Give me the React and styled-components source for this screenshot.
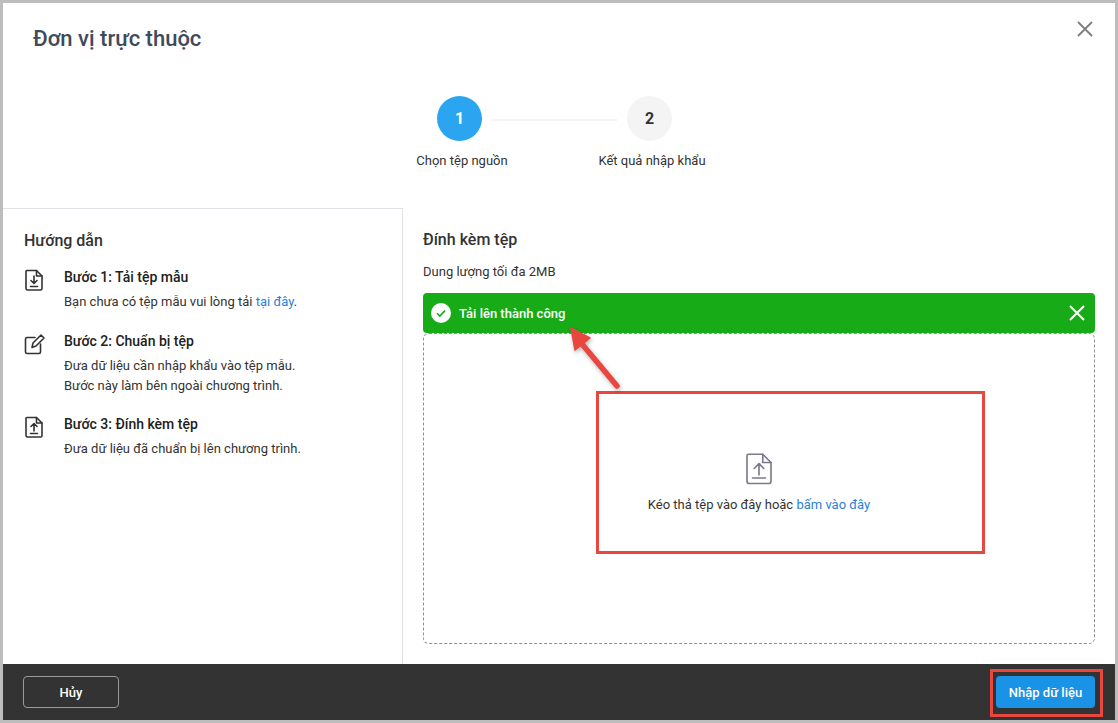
import React from "react"
import styled, { createGlobalStyle } from "styled-components"

const GlobalStyle = createGlobalStyle`
  html, body {
    margin: 0;
    padding: 0;
    background: #fff;
  }
  body {
    font-family: Roboto, "Liberation Sans", sans-serif;
    color: #212121;
  }
  * {
    box-sizing: border-box;
  }
`

const Frame = styled.div`
  position: relative;
  width: 1118px;
  height: 723px;
  border: 3px solid #bdbdbd;
  display: flex;
  flex-direction: column;
  background: #fff;
  overflow: hidden;
`

const Header = styled.div`
  height: 70px;
  padding: 21px 21px 0 30px;
  display: flex;
  justify-content: space-between;
  align-items: flex-start;
`

const Title = styled.h1`
  margin: 0;
  font-size: 22px;
  line-height: 30px;
  font-weight: 500;
  color: #3f4a5a;
`

const CloseButton = styled.div`
  margin-top: -4px;
  color: #7d7d7d;
  line-height: 0;
`

const Stepper = styled.div`
  height: 135px;
  padding: 23px 9px 0 0;
  display: flex;
  justify-content: center;
`

const Step = styled.div`
  width: 190px;
  display: flex;
  flex-direction: column;
  align-items: center;
  position: relative;
`

const StepCircle = styled.div`
  width: 45px;
  height: 45px;
  border-radius: 50%;
  display: flex;
  align-items: center;
  justify-content: center;
  font-size: 16px;
  font-weight: 700;
  background: ${props => (props.$active ? "#2ca5f0" : "#f4f4f4")};
  color: ${props => (props.$active ? "#fff" : "#333")};
`

const StepLine = styled.div`
  position: absolute;
  top: 23px;
  left: 127px;
  width: 125px;
  height: 2px;
  background: #f4f4f4;
`

const StepLabel = styled.div`
  margin-top: 11px;
  margin-left: 5px;
  font-size: 13px;
  line-height: 18px;
  color: #333;
  white-space: nowrap;
`

const Body = styled.div`
  flex: 1;
  display: flex;
  min-height: 0;
`

const GuidePanel = styled.div`
  width: 400px;
  border-top: 1px solid #dfe1e6;
  border-right: 1px solid #dfe1e6;
  padding: 22px 20px 0 21px;
`

const PanelTitle = styled.h2`
  margin: 0;
  font-size: 16px;
  line-height: 20px;
  font-weight: 500;
  color: #333;
`

const GuideStep = styled.div`
  display: flex;
  margin-top: ${props => props.$gap}px;
`

const GuideIcon = styled.div`
  width: 40px;
  flex: none;
  padding-top: 2px;
  color: #333;
  line-height: 0;
`

const GuideTitle = styled.div`
  font-size: 14px;
  line-height: 20px;
  font-weight: 500;
  color: #212121;
`

const GuideText = styled.div`
  margin-top: 5px;
  font-size: 13px;
  line-height: 20px;
  color: #333;
`

const Link = styled.span`
  color: #2b7fd8;
`

const UploadPanel = styled.div`
  flex: 1;
  padding: 22px 20px 20px 20px;
  display: flex;
  flex-direction: column;
`

const Limit = styled.div`
  margin-top: 12px;
  font-size: 13px;
  line-height: 20px;
  color: #333;
`

const SuccessBar = styled.div`
  margin-top: 11px;
  height: 40px;
  flex: none;
  background: #17ab17;
  border-radius: 4px;
  padding: 0 10px 0 8px;
  display: flex;
  align-items: center;
  color: #fff;
  font-size: 13px;
  font-weight: 500;
`

const SuccessText = styled.span`
  flex: 1;
  margin-left: 8px;
`

const DropZone = styled.div`
  flex: 1;
  border: 1px dashed #8f8f8f;
  border-radius: 6px;
  display: flex;
  flex-direction: column;
  align-items: center;
  padding-top: 118px;
  color: #333;
  font-size: 13px;
`

const DropIcon = styled.div`
  line-height: 0;
  color: #7a7a8c;
`

const DropText = styled.div`
  margin-top: 10px;
  line-height: 20px;
`

const Footer = styled.div`
  height: 56px;
  flex: none;
  background: #333;
  padding: 12px 20px;
  display: flex;
  justify-content: space-between;
`

const CancelButton = styled.div`
  width: 96px;
  height: 32px;
  border: 1px solid #9a9a9a;
  border-radius: 4px;
  color: #fff;
  font-size: 13px;
  font-weight: 500;
  display: flex;
  align-items: center;
  justify-content: center;
`

const PrimaryButton = styled.div`
  width: 99px;
  height: 32px;
  border-radius: 4px;
  background: #1a93e6;
  color: #fff;
  font-size: 13px;
  font-weight: 500;
  display: flex;
  align-items: center;
  justify-content: center;
`

const Callout = styled.div`
  position: absolute;
  left: ${props => props.$x}px;
  top: ${props => props.$y}px;
  width: ${props => props.$w}px;
  height: ${props => props.$h}px;
  border: 3px solid #e8473f;
`

const Arrow = styled.svg`
  position: absolute;
  left: 560px;
  top: 322px;
  overflow: visible;
  filter: drop-shadow(1px 2px 2px rgba(0, 0, 0, 0.3));
`

const FileIcon = ({ size = 20, children, strokeWidth = 1.6 }) => (
  <svg width={size} height={size * 1.1} viewBox="0 0 20 22" fill="none" stroke="currentColor" strokeWidth={strokeWidth} strokeLinejoin="round" strokeLinecap="round">
    <path d="M3 1.5h9.5L18 7v12.5a1.5 1.5 0 0 1-1.5 1.5h-13A1.5 1.5 0 0 1 2 19.5v-17A1 1 0 0 1 3 1.5Z" />
    <path d="M12.5 1.5V7H18" />
    {children}
  </svg>
)

const App = () => (
  <>
    <GlobalStyle />
    <Frame>
      <Header>
        <Title>Đơn vị trực thuộc</Title>
        <CloseButton>
          <svg width="18" height="18" viewBox="0 0 18 18" fill="none" stroke="currentColor" strokeWidth="1.8">
            <path d="M2 2l14 14M16 2L2 16" />
          </svg>
        </CloseButton>
      </Header>

      <Stepper>
        <Step>
          <StepCircle $active>1</StepCircle>
          <StepLine />
          <StepLabel>Chọn tệp nguồn</StepLabel>
        </Step>
        <Step>
          <StepCircle>2</StepCircle>
          <StepLabel>Kết quả nhập khẩu</StepLabel>
        </Step>
      </Stepper>

      <Body>
        <GuidePanel>
          <PanelTitle>Hướng dẫn</PanelTitle>
          <GuideStep $gap={16}>
            <GuideIcon>
              <FileIcon>
                <path d="M10 7v7M7 11.5l3 3 3-3M6.5 17.5h7" />
              </FileIcon>
            </GuideIcon>
            <div>
              <GuideTitle>Bước 1: Tải tệp mẫu</GuideTitle>
              <GuideText>
                Bạn chưa có tệp mẫu vui lòng tải <Link>tại đây</Link>.
              </GuideText>
            </div>
          </GuideStep>
          <GuideStep $gap={19}>
            <GuideIcon>
              <svg width="22" height="22" viewBox="0 0 22 22" fill="none" stroke="currentColor" strokeWidth="1.6" strokeLinejoin="round" strokeLinecap="round">
                <path d="M11 4.5H3a1.5 1.5 0 0 0-1.5 1.5v13A1.5 1.5 0 0 0 3 20.5h12a1.5 1.5 0 0 0 1.5-1.5v-8" />
                <path d="M8 14.5l1-4.5 8-8 3 3-8 8Z" />
              </svg>
            </GuideIcon>
            <div>
              <GuideTitle>Bước 2: Chuẩn bị tệp</GuideTitle>
              <GuideText>
                Đưa dữ liệu cần nhập khẩu vào tệp mẫu.
                <br />
                Bước này làm bên ngoài chương trình.
              </GuideText>
            </div>
          </GuideStep>
          <GuideStep $gap={18}>
            <GuideIcon>
              <FileIcon>
                <path d="M10 15V8M7 10.5l3-3 3 3M6.5 17.5h7" />
              </FileIcon>
            </GuideIcon>
            <div>
              <GuideTitle>Bước 3: Đính kèm tệp</GuideTitle>
              <GuideText>Đưa dữ liệu đã chuẩn bị lên chương trình.</GuideText>
            </div>
          </GuideStep>
        </GuidePanel>

        <UploadPanel>
          <PanelTitle>Đính kèm tệp</PanelTitle>
          <Limit>Dung lượng tối đa 2MB</Limit>
          <SuccessBar>
            <svg width="20" height="20" viewBox="0 0 20 20">
              <circle cx="10" cy="10" r="10" fill="#fff" />
              <path d="M6 10.2l2.8 2.8L14 7.6" fill="none" stroke="#17ab17" strokeWidth="1.6" />
            </svg>
            <SuccessText>Tải lên thành công</SuccessText>
            <svg width="16" height="16" viewBox="0 0 16 16" fill="none" stroke="#fff" strokeWidth="2">
              <path d="M1 1l14 14M15 1L1 15" />
            </svg>
          </SuccessBar>
          <DropZone>
            <DropIcon>
              <FileIcon size={30} strokeWidth={1.1}>
                <path d="M10 15.3V8M6.8 11L10 7.8l3.2 3.2M5.7 17.3h8.6" />
              </FileIcon>
            </DropIcon>
            <DropText>
              Kéo thả tệp vào đây hoặc <Link>bấm vào đây</Link>
            </DropText>
          </DropZone>
        </UploadPanel>
      </Body>

      <Footer>
        <CancelButton>Hủy</CancelButton>
        <PrimaryButton>Nhập dữ liệu</PrimaryButton>
      </Footer>

      <Callout $x={593} $y={388} $w={389} $h={163} />
      <Callout $x={987} $y={666} $w={113} $h={48} />
      <Arrow width="62" height="70" viewBox="0 0 62 70">
        <path d="M54 61L19 19" stroke="#e8473f" strokeWidth="5.5" strokeLinecap="round" />
        <path d="M8 3L27 13L12 25Z" fill="#e8473f" stroke="#e8473f" strokeWidth="1.5" strokeLinejoin="round" />
      </Arrow>
    </Frame>
  </>
)

export default App
